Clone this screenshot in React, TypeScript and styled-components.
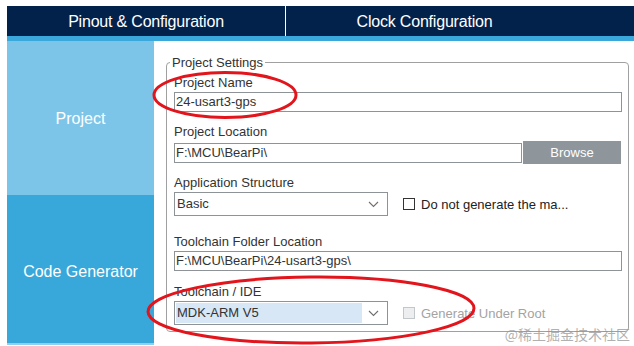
import React, { FC } from "react";
import styled, { createGlobalStyle, css } from "styled-components";

const GlobalStyle = createGlobalStyle`
    html, body {
        margin: 0;
        padding: 0;
        background: #ffffff;
    }
    body {
        font-family: "Liberation Sans", Arial, sans-serif;
    }
`;

const colors = {
    navy: "#03224b",
    stripe: "#3aa8db",
    sideLight: "#7dc5e8",
    sideDark: "#38a7da",
    border: "#8e9398",
    text: "#333333",
    annotation: "#e2141c",
};

const Chevron: FC = () => (
    <svg width="11" height="7" viewBox="0 0 11 7">
        <path d="M1 1 L5.5 5.5 L10 1" fill="none" stroke="#6f6f6f" strokeWidth="1.1" />
    </svg>
);

type SelectProps = { value: string; highlighted?: boolean };
const Select: FC<SelectProps> = ({ value, highlighted }) => (
    <SelectBox>
        <SelectValue $highlighted={highlighted}>{value}</SelectValue>
        <ChevronCell>
            <Chevron />
        </ChevronCell>
    </SelectBox>
);

type CheckProps = { label: string; disabled?: boolean };
const Check: FC<CheckProps> = ({ label, disabled }) => (
    <CheckRow $disabled={disabled}>
        <CheckBoxSquare $disabled={disabled} />
        <span>{label}</span>
    </CheckRow>
);

export default function App() {
    return (
        <Page>
            <GlobalStyle />
            <Header>
                <Tabs>
                    <Tab>Pinout &amp; Configuration</Tab>
                    <Tab $divider>Clock Configuration</Tab>
                </Tabs>
                <Stripe />
            </Header>
            <Body>
                <Sidebar>
                    <SideItem $tone="light">Project</SideItem>
                    <SideItem $tone="dark">Code Generator</SideItem>
                </Sidebar>
                <Content>
                    <Settings>
                        <Legend>Project Settings</Legend>

                        <Label $top={5}>Project Name</Label>
                        <TextBox>24-usart3-gps</TextBox>

                        <Label $top={12}>Project Location</Label>
                        <InlineRow>
                            <TextBox $width={348}>F:\MCU\BearPi\</TextBox>
                            <BrowseButton>Browse</BrowseButton>
                        </InlineRow>

                        <Label $top={11}>Application Structure</Label>
                        <InlineRow $gap={15}>
                            <Select value="Basic" />
                            <Check label="Do not generate the ma..." />
                        </InlineRow>

                        <Label $top={18}>Toolchain Folder Location</Label>
                        <TextBox>F:\MCU\BearPi\24-usart3-gps\</TextBox>

                        <Label $top={13}>Toolchain / IDE</Label>
                        <InlineRow $gap={15}>
                            <Select value="MDK-ARM V5" highlighted />
                            <Check label="Generate Under Root" disabled />
                        </InlineRow>
                    </Settings>
                </Content>
            </Body>
            <Annotations width="634" height="346" viewBox="0 0 634 346">
                <ellipse cx="225" cy="95" rx="71" ry="22.5" fill="none" stroke={colors.annotation} strokeWidth="3" />
                <ellipse
                    cx="311"
                    cy="310"
                    rx="163"
                    ry="33"
                    fill="none"
                    stroke={colors.annotation}
                    strokeWidth="3"
                    transform="rotate(-0.6 311 310)"
                />
            </Annotations>
            <Watermark>@稀土掘金技术社区</Watermark>
        </Page>
    );
}

const Page = styled.div`
    position: relative;
    width: 634px;
    height: 346px;
    overflow: hidden;
    background: #ffffff;
`;

const Header = styled.div`
    padding: 6px 0 0 7px;
`;

const Tabs = styled.div`
    display: flex;
    height: 30px;
    background: ${colors.navy};
`;

const Tab = styled.div<{ $divider?: boolean }>`
    flex: 0 0 278px;
    display: flex;
    align-items: center;
    justify-content: center;
    color: #ffffff;
    font-size: 16px;
    letter-spacing: -0.2px;
    padding-top: 1px;
    box-sizing: border-box;
    ${(p) =>
        p.$divider &&
        css`
            border-left: 1px solid #ffffff;
        `}
`;

const Stripe = styled.div`
    height: 5px;
    background: ${colors.stripe};
`;

const Body = styled.div`
    display: flex;
    height: 305px;
    margin-left: 7px;
`;

const Sidebar = styled.div`
    flex: 0 0 147px;
    display: flex;
    flex-direction: column;
`;

const SideItem = styled.div<{ $tone: "light" | "dark" }>`
    display: flex;
    align-items: center;
    justify-content: center;
    color: #ffffff;
    font-size: 16px;
    background: ${(p) => (p.$tone === "light" ? colors.sideLight : colors.sideDark)};
    ${(p) =>
        p.$tone === "light"
            ? css`
                  height: 154px;
                  padding-top: 2px;
                  box-sizing: border-box;
              `
            : css`
                  flex: 1;
                  border-bottom: 2px solid #8fd0ee;
                  margin-bottom: 1px;
                  padding-top: 6px;
              `}
`;

const Content = styled.div`
    flex: 1;
    padding: 14px 0 0 12px;
`;

const Settings = styled.fieldset`
    box-sizing: border-box;
    width: 463px;
    margin: 0;
    padding: 0 6px 6px 7px;
    border: 1px solid #a0a0a0;
    border-radius: 4px;
    display: flex;
    flex-direction: column;
    align-items: flex-start;
`;

const Legend = styled.legend`
    padding: 0 2px;
    margin-left: -4px;
    font-size: 13px;
    line-height: 15px;
    color: ${colors.text};
`;

const Label = styled.div<{ $top: number }>`
    margin-top: ${(p) => p.$top}px;
    margin-bottom: 1px;
    font-size: 13px;
    line-height: 16px;
    color: ${colors.text};
`;

const TextBox = styled.div<{ $width?: number }>`
    box-sizing: border-box;
    width: ${(p) => p.$width ?? 448}px;
    height: 20px;
    border: 1px solid ${colors.border};
    padding-left: 1px;
    font-size: 13px;
    line-height: 18px;
    color: ${colors.text};
    white-space: nowrap;
    overflow: hidden;
`;

const InlineRow = styled.div<{ $gap?: number }>`
    display: flex;
    align-items: center;
    gap: ${(p) => p.$gap ?? 1}px;
`;

const BrowseButton = styled.div`
    width: 98px;
    height: 23px;
    background: #8e969c;
    color: #ffffff;
    font-size: 13px;
    display: flex;
    align-items: center;
    justify-content: center;
`;

const SelectBox = styled.div`
    box-sizing: border-box;
    width: 214px;
    height: 24px;
    border: 1px solid ${colors.border};
    padding: 1px;
    display: flex;
`;

const SelectValue = styled.div<{ $highlighted?: boolean }>`
    flex: 1;
    padding-left: 1px;
    font-size: 13px;
    line-height: 20px;
    color: ${colors.text};
    background: ${(p) => (p.$highlighted ? "#d7e7f5" : "transparent")};
`;

const ChevronCell = styled.div`
    flex: 0 0 22px;
    display: flex;
    align-items: center;
    justify-content: center;
    padding-right: 2px;
`;

const CheckRow = styled.div<{ $disabled?: boolean }>`
    display: flex;
    align-items: center;
    gap: 6px;
    font-size: 13px;
    color: ${(p) => (p.$disabled ? "#a3a3a3" : "#222222")};
`;

const CheckBoxSquare = styled.div<{ $disabled?: boolean }>`
    box-sizing: border-box;
    width: 12px;
    height: 12px;
    border: 1px solid ${(p) => (p.$disabled ? "#c4c7ca" : "#333333")};
    background: ${(p) => (p.$disabled ? "#eceef0" : "#ffffff")};
`;

const Annotations = styled.svg`
    position: absolute;
    left: 0;
    top: 0;
    pointer-events: none;
`;

const Watermark = styled.div`
    position: absolute;
    right: 4px;
    bottom: 4px;
    font-family: "Noto Sans CJK SC", sans-serif;
    font-size: 14px;
    line-height: 16px;
    color: rgba(150, 150, 150, 0.75);
`;
